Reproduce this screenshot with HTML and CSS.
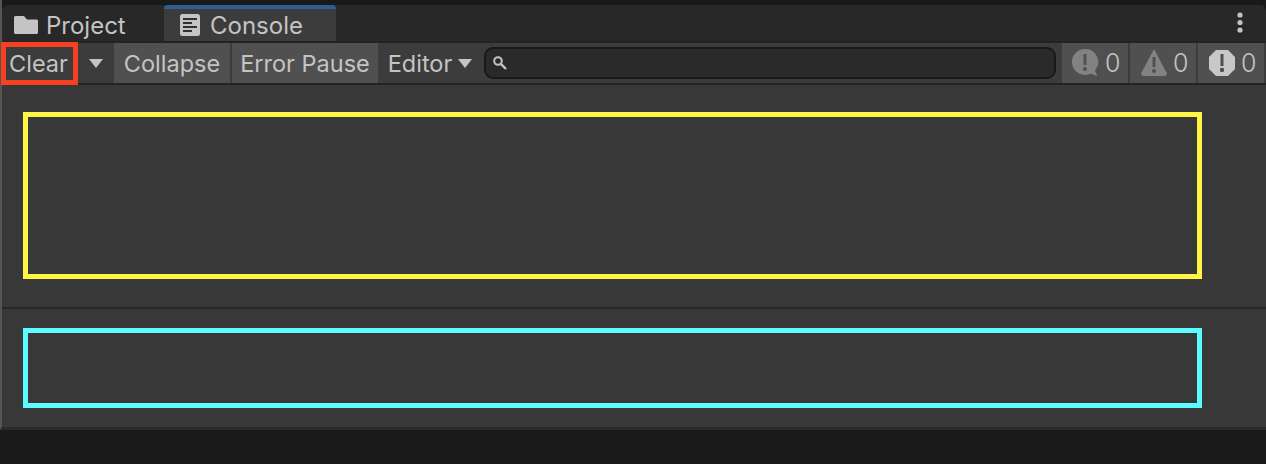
FILE: index.html
```html
<!DOCTYPE html>
<html lang="en">
<head>
<meta charset="utf-8">
<title>Console</title>
<link rel="stylesheet" href="styles.css">
</head>
<body>
<div class="window">
  <div class="tabbar">
    <div class="tab tab-project">
      <svg class="tab-icon" width="24" height="18" viewBox="0 0 24 18"><path fill="#c4c4c4" d="M0 1 1 0H10l3 3.500h10L24 4.500V17L23 18H1L0 17Z"/></svg>
      <span>Project</span>
    </div>
    <div class="tab tab-console">
      <svg class="tab-icon" width="20" height="22" viewBox="0 0 20 22"><rect width="20" height="22" rx="2.500" fill="#c4c4c4"/><path fill="#303030" d="M3 4h14v2H3zM3 8h9v2H3zM3 12h14v2H3zM3 16h9v2H3z"/></svg>
      <span>Console</span>
    </div>
    <div class="tab-spacer"></div>
    <svg class="kebab" width="8" height="22" viewBox="0 0 8 22"><circle cx="4" cy="3" r="2.600" fill="#c4c4c4"/><circle cx="4" cy="10.500" r="2.600" fill="#c4c4c4"/><circle cx="4" cy="18" r="2.600" fill="#c4c4c4"/></svg>
  </div>
  <div class="toolbar">
    <button class="btn btn-clear">Clear<span class="clear-outline"></span></button>
    <button class="btn btn-drop"><span class="caret"></span></button>
    <button class="btn btn-on btn-collapse">Collapse</button>
    <button class="btn btn-on btn-pause">Error Pause</button>
    <button class="btn btn-editor">Editor<span class="caret"></span></button>
    <div class="search">
      <svg width="16" height="16" viewBox="0 0 16 16"><circle cx="6" cy="6" r="3.800" fill="none" stroke="#c4c4c4" stroke-width="2"/><path d="M8.800 8.800 14 14" stroke="#c4c4c4" stroke-width="2.400"/></svg>
    </div>
    <button class="btn btn-on btn-count">
      <svg width="28" height="28" viewBox="0 0 28 28"><path fill="#828282" d="M13 0a13 13 0 1 0 6 24.500l5.500 2.500.5-.5-2-5A13 13 0 0 0 13 0Z"/><path fill="#505050" d="M11.500 5h3v11h-3z"/><circle cx="13" cy="20" r="2" fill="#505050"/></svg>
      <span class="count">0</span>
    </button>
    <button class="btn btn-on btn-count">
      <svg width="28" height="28" viewBox="0 0 28 28"><path fill="#828282" d="M14 0 27 24.500 25.500 27h-23L1 24.500Z"/><path fill="#505050" d="M12.500 8h3v10h-3z"/><circle cx="14" cy="22" r="2" fill="#505050"/></svg>
      <span class="count">0</span>
    </button>
    <button class="btn btn-on btn-count">
      <svg width="28" height="28" viewBox="0 0 28 28"><path fill="#c8c8c8" d="M8 1h12l7 7v12l-7 7H8l-7-7V8Z"/><path fill="#505050" d="M12.500 5h3v12h-3z"/><circle cx="14" cy="21" r="2.200" fill="#505050"/></svg>
      <span class="count">0</span>
    </button>
  </div>
  <div class="log-pane">
    <div class="highlight highlight-yellow"></div>
  </div>
  <div class="detail-pane">
    <div class="highlight highlight-cyan"></div>
  </div>
</div>
<div class="footer"></div>
</body>
</html>
```
FILE: styles.css
```css
* { box-sizing: border-box; }
html, body { margin: 0; padding: 0; }
body {
  width: 1266px;
  height: 464px;
  overflow: hidden;
  background: #1a1a1a;
  font-family: "Inter", "Liberation Sans", sans-serif;
  color: #c4c4c4;
  display: flex;
  flex-direction: column;
}
.window {
  height: 430px;
  padding-top: 5px;
  background: #191919;
  display: flex;
  flex-direction: column;
  border-left: 2px solid #555;
  border-bottom: 3px solid #2a2a2a;
  flex: none;
}
.tabbar {
  height: 36px;
  background: #282828;
  display: flex;
  align-items: stretch;
  font-size: 24px;
  border-radius: 6px 6px 0 0;
  flex: none;
}
.tab {
  display: flex;
  align-items: center;
  flex: none;
}
.tab-project { width: 162px; padding: 4px 0 0 12px; gap: 8px; }
.tab-console {
  width: 172px;
  padding-left: 16px;
  gap: 10px;
  background: #3c3c3c;
  border-top: 4px solid #2d5f92;
  border-radius: 4px 4px 0 0;
}
.tab-spacer { flex: 1; }
.kebab { align-self: center; margin-right: 22px; }
.toolbar {
  height: 44px;
  background: #3c3c3c;
  border-top: 2px solid #232323;
  border-bottom: 2px solid #232323;
  display: flex;
  align-items: stretch;
  gap: 2px;
  padding-right: 2px;
  flex: none;
}
.btn {
  position: relative;
  border: 0;
  margin: 0;
  padding: 0;
  background: #3c3c3c;
  color: #c4c4c4;
  font: inherit;
  font-size: 23.500px;
  display: flex;
  align-items: center;
  justify-content: center;
  flex: none;
}
.btn-on { background: #505050; }
.btn-clear { width: 76px; padding-right: 3px; }
.clear-outline {
  position: absolute;
  left: -1px;
  top: -1px;
  right: 0;
  bottom: -2px;
  border: 5px solid #f54021;
}
.btn-drop { width: 32px; }
.btn-collapse { width: 116px; }
.btn-pause { width: 146px; }
.btn-editor { width: 100px; gap: 6px; }
.caret {
  width: 0;
  height: 0;
  border-left: 7.500px solid transparent;
  border-right: 7.500px solid transparent;
  border-top: 9px solid #c4c4c4;
}
.search {
  flex: 1;
  margin: 4px 4px 4px 2px;
  background: #2a2a2a;
  border: 2px solid #191919;
  border-radius: 9px;
  display: flex;
  align-items: center;
  padding-left: 6px;
}
.btn-count { width: 66px; gap: 5px; justify-content: flex-start; padding-left: 10px; }
.count { font-size: 25px; font-weight: 300; }
.log-pane {
  height: 224px;
  background: #383838;
  padding: 27px 0 0 21px;
  border-bottom: 2px solid #282828;
  flex: none;
}
.detail-pane {
  flex: 1;
  background: #383838;
  padding: 19px 0 0 21px;
}
.highlight { width: 1179px; border-style: solid; border-width: 5px; }
.highlight-yellow { height: 167px; border-color: #fff545; }
.highlight-cyan { height: 80px; border-color: #5bfbff; }
.footer { flex: 1; background: #1a1a1a; }
```
